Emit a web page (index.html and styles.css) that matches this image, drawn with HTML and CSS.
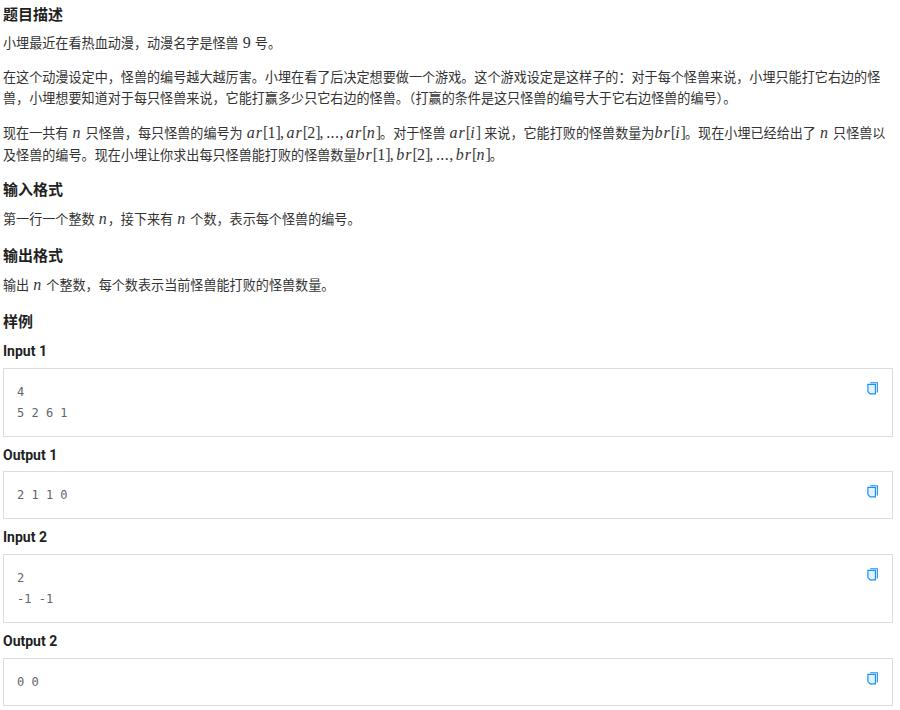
FILE: index.html
```html
<!DOCTYPE html>
<html lang="zh">
<head>
<meta charset="utf-8">
<title>题目描述</title>
<link rel="stylesheet" href="styles.css">
</head>
<body>
<main class="problem">
  <h2>题目描述</h2>
  <p>小埋最近在看热血动漫，动漫名字是怪兽 <span class="num">9</span> 号。</p>
  <p>在这个动漫设定中，怪兽的编号越大越厉害。小埋在看了后决定想要做一个游戏。这个游戏设定是这样子的：对于每个怪兽来说，小埋只能打它右边的怪兽，小埋想要知道对于每只怪兽来说，它能打赢多少只它右边的怪兽。（打赢的条件是这只怪兽的编号大于它右边怪兽的编号）。</p>
  <p class="tall">现在一共有 <i class="m">n</i> 只怪兽，每只怪兽的编号为 <span class="f"><i class="m">ar</i><span class="br">[</span><span class="num">1</span><span class="br">]</span><span class="c">,</span><i class="m">ar</i><span class="br">[</span><span class="num">2</span><span class="br">]</span><span class="c">,</span><span class="d">...</span><span class="c">,</span><i class="m">ar</i><span class="br">[</span><i class="m">n</i><span class="br">]</span></span>。对于怪兽 <span class="f"><i class="m">ar</i><span class="br">[</span><i class="m">i</i><span class="br">]</span></span> 来说，它能打败的怪兽数量为<span class="f"><i class="m">br</i><span class="br">[</span><i class="m">i</i><span class="br">]</span></span>。现在小埋已经给出了 <i class="m">n</i> 只怪兽以及怪兽的编号。现在小埋让你求出每只怪兽能打败的怪兽数量<span class="f"><i class="m">br</i><span class="br">[</span><span class="num">1</span><span class="br">]</span><span class="c">,</span><i class="m">br</i><span class="br">[</span><span class="num">2</span><span class="br">]</span><span class="c">,</span><span class="d">...</span><span class="c">,</span><i class="m">br</i><span class="br">[</span><i class="m">n</i><span class="br">]</span></span>。</p>

  <h2>输入格式</h2>
  <p class="fmt">第一行一个整数 <i class="m">n</i>，接下来有 <i class="m">n</i> 个数，表示每个怪兽的编号。</p>

  <h2>输出格式</h2>
  <p class="fmt">输出 <i class="m">n</i> 个整数，每个数表示当前怪兽能打败的怪兽数量。</p>

  <h2>样例</h2>

  <h3>Input 1</h3>
  <div class="sample">
    <pre>4
5 2 6 1</pre>
    <svg class="copy" viewBox="0 0 12 14" width="11" height="13" aria-hidden="true"><path d="M3.5 .7H11.3V11.3" fill="none" stroke="#1890ff" stroke-width="1.2"/><path d="M1 2.6H9.2V12.9H3.4L1 10.4Z" fill="#e3f2fd" stroke="#1890ff" stroke-width="1.3"/></svg>
  </div>

  <h3>Output 1</h3>
  <div class="sample">
    <pre>2 1 1 0</pre>
    <svg class="copy" viewBox="0 0 12 14" width="11" height="13" aria-hidden="true"><path d="M3.5 .7H11.3V11.3" fill="none" stroke="#1890ff" stroke-width="1.2"/><path d="M1 2.6H9.2V12.9H3.4L1 10.4Z" fill="#e3f2fd" stroke="#1890ff" stroke-width="1.3"/></svg>
  </div>

  <h3>Input 2</h3>
  <div class="sample">
    <pre>2
-1 -1</pre>
    <svg class="copy" viewBox="0 0 12 14" width="11" height="13" aria-hidden="true"><path d="M3.5 .7H11.3V11.3" fill="none" stroke="#1890ff" stroke-width="1.2"/><path d="M1 2.6H9.2V12.9H3.4L1 10.4Z" fill="#e3f2fd" stroke="#1890ff" stroke-width="1.3"/></svg>
  </div>

  <h3>Output 2</h3>
  <div class="sample">
    <pre>0 0</pre>
    <svg class="copy" viewBox="0 0 12 14" width="11" height="13" aria-hidden="true"><path d="M3.5 .7H11.3V11.3" fill="none" stroke="#1890ff" stroke-width="1.2"/><path d="M1 2.6H9.2V12.9H3.4L1 10.4Z" fill="#e3f2fd" stroke="#1890ff" stroke-width="1.3"/></svg>
  </div>
</main>
</body>
</html>
```
FILE: styles.css
```css
html, body {
  margin: 0;
  padding: 0;
  background: #fff;
}
body {
  font-family: Roboto, "Noto Sans CJK SC", sans-serif;
  color: #333;
  font-size: 13px;
}
.problem {
  width: 890px;
  padding: 3px 7px 0 3px;
}
h2 {
  margin: 0 0 7px;
  font-size: 15px;
  line-height: 24px;
  font-weight: 700;
  color: #1f1f1f;
}
p {
  margin: 0 0 13px;
  line-height: 20.8px;
  font-size: 13.1px;
  word-spacing: .8px;
}
p.tall {
  padding-top: 1px;
  margin-bottom: 11px;
  line-height: 22px;
}
p.fmt {
  margin-top: 8px;
  margin-bottom: 13px;
}
h3 {
  margin: 0 0 6px;
  font-size: 14px;
  line-height: 20.8px;
  font-weight: 700;
  color: #1f1f1f;
}
.f, .m, .num, .br, .c, .d {
  font-family: "Liberation Serif", serif;
  font-size: 16px;
  line-height: 0;
}
.m {
  font-style: italic;
  letter-spacing: 1px;
}
.br {
  letter-spacing: -.9px;
  color: #444;
}
.c {
  margin-right: 2.6px;
}
.d {
  letter-spacing: .4px;
}
.sample {
  position: relative;
  box-sizing: border-box;
  width: 890px;
  border: 1px solid #ddd;
  padding: 13px 13px 12px;
  margin-bottom: 7.8px;
}
.sample pre {
  margin: 0;
  font-family: "DejaVu Sans Mono", monospace;
  font-size: 12px;
  line-height: 21px;
  color: #60666e;
}
.copy {
  position: absolute;
  top: 13px;
  right: 14px;
}
```
